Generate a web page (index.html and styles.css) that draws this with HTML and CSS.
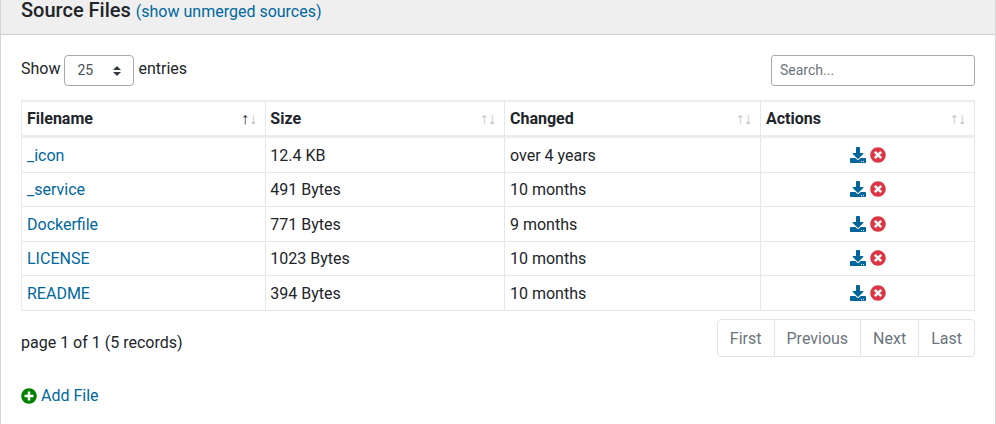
FILE: index.html
```html
<!DOCTYPE html>
<html lang="en">
<head>
<meta charset="utf-8">
<title>Source Files</title>
<link rel="stylesheet" href="styles.css">
</head>
<body>
<svg class="sprite" aria-hidden="true">
  <symbol id="download" viewBox="0 0 512 512"><path d="M216 0h80c13.3 0 24 10.7 24 24v168h87.7c17.8 0 26.7 21.5 14.1 34.1L269.7 378.3c-7.5 7.5-19.8 7.5-27.3 0L90.1 226.1c-12.6-12.6-3.7-34.1 14.1-34.1H192V24c0-13.3 10.7-24 24-24zm296 376v112c0 13.3-10.7 24-24 24H24c-13.3 0-24-10.7-24-24V376c0-13.3 10.7-24 24-24h146.7l49 49c20.1 20.1 52.5 20.1 72.6 0l49-49H488c13.3 0 24 10.7 24 24zm-124 88c0-11-9-20-20-20s-20 9-20 20 9 20 20 20 20-9 20-20zm64 0c0-11-9-20-20-20s-20 9-20 20 9 20 20 20 20-9 20-20z"/></symbol>
  <symbol id="remove" viewBox="0 0 512 512"><path d="M256 8C119 8 8 119 8 256s111 248 248 248 248-111 248-248S393 8 256 8zm121.6 313.1c4.7 4.7 4.7 12.3 0 17L338 377.6c-4.7 4.7-12.3 4.7-17 0L256 312l-65.1 65.6c-4.7 4.7-12.3 4.7-17 0L134.4 338c-4.7-4.7-4.7-12.3 0-17l65.6-65-65.6-65.1c-4.7-4.7-4.7-12.3 0-17l39.6-39.6c4.7-4.7 12.3-4.7 17 0l65 65.7 65.1-65.6c4.7-4.7 12.3-4.7 17 0l39.6 39.6c4.7 4.7 4.7 12.3 0 17L312 256l65.6 65.1z"/></symbol>
  <symbol id="plus" viewBox="0 0 512 512"><path d="M256 8C119 8 8 119 8 256s111 248 248 248 248-111 248-248S393 8 256 8zm144 276c0 6.6-5.4 12-12 12h-92v92c0 6.6-5.4 12-12 12h-56c-6.6 0-12-5.4-12-12v-92h-92c-6.6 0-12-5.4-12-12v-56c0-6.6 5.4-12 12-12h92v-92c0-6.6 5.4-12 12-12h56c6.6 0 12 5.4 12 12v92h92c6.6 0 12 5.4 12 12v56z"/></symbol>
</svg>
<div class="card">
  <header class="card-header">
    <h5>Source Files</h5>
    <a href="#">(show unmerged sources)</a>
  </header>
  <div class="card-body">
    <div class="toolbar">
      <div class="length">
        <span>Show</span>
        <button class="select" type="button">25
          <svg viewBox="0 0 4 5"><path d="M2 0L0 2h4zm0 5L0 3h4z"/></svg>
        </button>
        <span>entries</span>
      </div>
      <input class="search" type="text" placeholder="Search..." aria-label="Search">
    </div>
    <table>
      <colgroup><col class="c-name"><col class="c-size"><col class="c-changed"><col class="c-actions"></colgroup>
      <thead>
        <tr>
          <th><div>Filename<span class="sort"><b>↑</b><i>↓</i></span></div></th>
          <th><div>Size<span class="sort"><i>↑</i><i>↓</i></span></div></th>
          <th><div>Changed<span class="sort"><i>↑</i><i>↓</i></span></div></th>
          <th><div>Actions<span class="sort"><i>↑</i><i>↓</i></span></div></th>
        </tr>
      </thead>
      <tbody>
        <tr><td><a href="#">_icon</a></td><td>12.4 KB</td><td>over 4 years</td><td><div class="actions"><svg class="download"><use href="#download"/></svg><svg class="remove"><use href="#remove"/></svg></div></td></tr>
        <tr><td><a href="#">_service</a></td><td>491 Bytes</td><td>10 months</td><td><div class="actions"><svg class="download"><use href="#download"/></svg><svg class="remove"><use href="#remove"/></svg></div></td></tr>
        <tr><td><a href="#">Dockerfile</a></td><td>771 Bytes</td><td>9 months</td><td><div class="actions"><svg class="download"><use href="#download"/></svg><svg class="remove"><use href="#remove"/></svg></div></td></tr>
        <tr><td><a href="#">LICENSE</a></td><td>1023 Bytes</td><td>10 months</td><td><div class="actions"><svg class="download"><use href="#download"/></svg><svg class="remove"><use href="#remove"/></svg></div></td></tr>
        <tr><td><a href="#">README</a></td><td>394 Bytes</td><td>10 months</td><td><div class="actions"><svg class="download"><use href="#download"/></svg><svg class="remove"><use href="#remove"/></svg></div></td></tr>
      </tbody>
    </table>
    <div class="footer">
      <span class="info">page 1 of 1 (5 records)</span>
      <nav class="pagination"><span>First</span><span>Previous</span><span>Next</span><span>Last</span></nav>
    </div>
    <a class="add" href="#"><svg><use href="#plus"/></svg>Add File</a>
  </div>
</div>
</body>
</html>
```
FILE: styles.css
```css
* { box-sizing: border-box; }
body {
  margin: 0;
  overflow: hidden;
  background: #fff;
  color: #212529;
  font: 16px/24px Roboto, "Liberation Sans", sans-serif;
}
a { color: #00679e; text-decoration: none; }
.sprite { display: none; }
.card {
  height: 424px;
  border: solid #d6d6d6;
  border-width: 0 1px;
}
.card-header {
  display: flex;
  align-items: baseline;
  gap: 5px;
  height: 35px;
  padding: 0 20px;
  background: #efefef;
  border-bottom: 1px solid #cfcfcf;
}
.card-header h5 { margin: 0; font-size: 20px; line-height: 20px; font-weight: 500; }
.card-header a { line-height: 20px; }
.card-body { padding: 20px 20px 0; }
.toolbar { display: flex; justify-content: space-between; height: 31px; }
.length { display: flex; gap: 4px; }
.length span { line-height: 27px; }
.select {
  display: flex;
  align-items: center;
  justify-content: space-between;
  width: 70px;
  height: 31px;
  padding: 0 12px;
  border: 1px solid #aaa;
  border-radius: 4px;
  background: #fff;
  color: #495057;
  font: 14px/21px Roboto, sans-serif;
}
.select svg { width: 8px; height: 10px; fill: #343a40; }
.search {
  width: 204px;
  height: 31px;
  padding: 3px 8px 5px;
  border: 1px solid #aaa;
  border-radius: 3px;
  font: 14px/21px Roboto, sans-serif;
}
.search::placeholder { color: #6c757d; opacity: 1; }
table {
  width: 954px;
  margin-top: 14px;
  table-layout: fixed;
  border-collapse: separate;
  border-spacing: 0;
  border-left: 1px solid #e8eaeb;
}
.c-name { width: 244px; }
.c-size { width: 239px; }
.c-changed { width: 256px; }
.c-actions { width: 214px; }
th, td {
  height: 35px;
  padding: 0 5px;
  text-align: left;
  border: solid #e5e8ea;
  border-width: 0 1px 1px 0;
}
td { padding-top: 2px; }
tbody tr:nth-child(even) td { height: 34px; padding-top: 0; }
th { height: 38px; padding-right: 8px; font-weight: 700; border-width: 2px 1px 3px 0; border-top-color: #ebedee; border-bottom-color: #ebedee; }
th:nth-child(2), td:nth-child(2) { padding-left: 4.3px; }
th div { display: flex; justify-content: space-between; }
.sort { display: flex; color: #212529; font-weight: 400; }
.sort b, .sort i { width: 8px; text-align: center; font-style: normal; font-weight: 400; }
.sort i { opacity: .32; }
.actions { display: flex; justify-content: center; gap: 4px; padding-bottom: 2px; }
tbody tr:nth-child(even) .actions { padding-bottom: 1px; }
svg.download, svg.remove, .add svg { width: 16px; height: 16px; }
.download { fill: #00659c; }
.remove { fill: #dc3545; }
.footer { display: flex; justify-content: space-between; padding-top: 8px; }
.info { padding-top: 12px; }
.pagination {
  display: flex;
  height: 38px;
  border: 1px solid #e1e4e6;
  border-radius: 4px;
  color: #6c757d;
}
.pagination span { padding: 7px 12px 5px; }
.pagination span + span { border-left: 1px solid #e1e4e6; }
.add { display: inline-flex; align-items: center; gap: 4px; margin-top: 27px; }
.add svg { fill: green; }
```
